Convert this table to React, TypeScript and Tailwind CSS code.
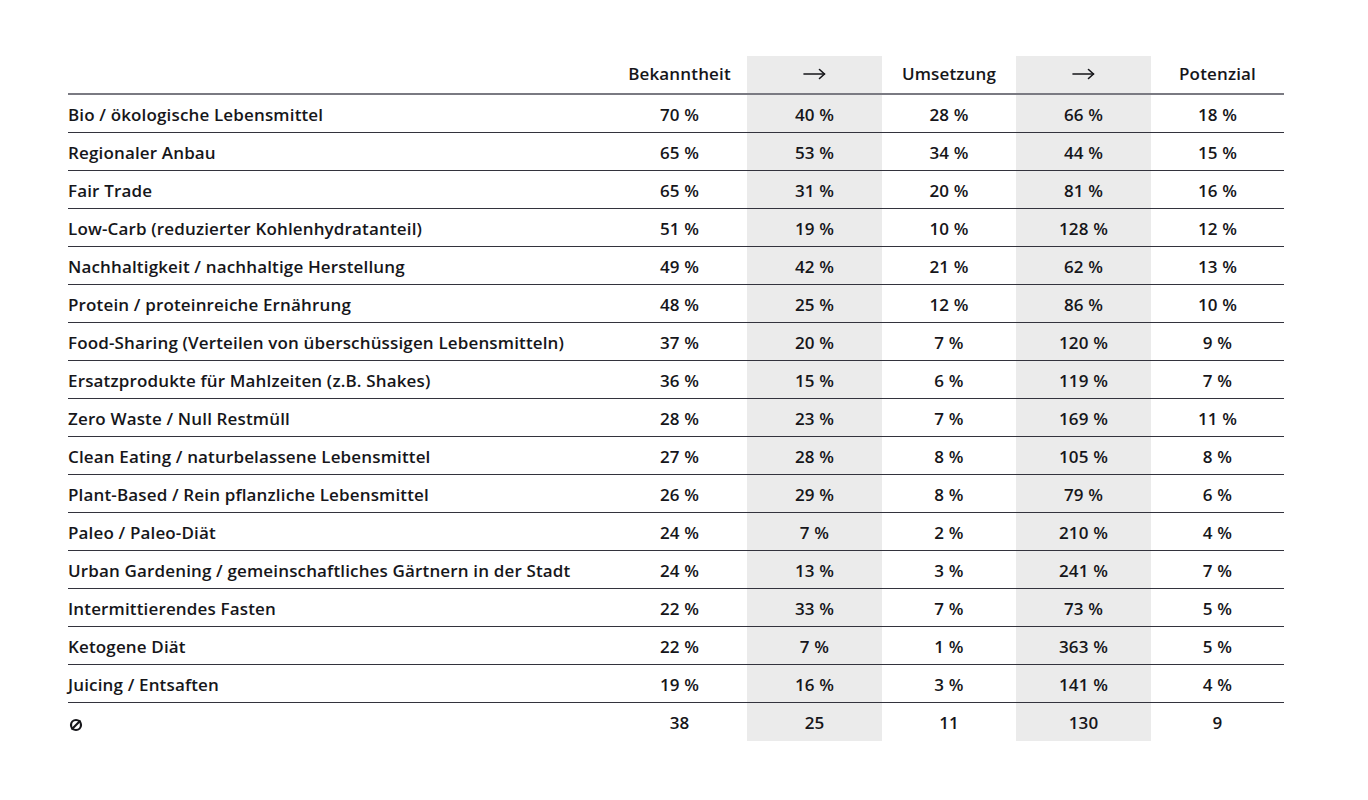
const rows: [string, string, string, string, string, string][] = [
  ['Bio / ökologische Lebensmittel', '70 %', '40 %', '28 %', '66 %', '18 %'],
  ['Regionaler Anbau', '65 %', '53 %', '34 %', '44 %', '15 %'],
  ['Fair Trade', '65 %', '31 %', '20 %', '81 %', '16 %'],
  ['Low-Carb (reduzierter Kohlenhydratanteil)', '51 %', '19 %', '10 %', '128 %', '12 %'],
  ['Nachhaltigkeit / nachhaltige Herstellung', '49 %', '42 %', '21 %', '62 %', '13 %'],
  ['Protein / proteinreiche Ernährung', '48 %', '25 %', '12 %', '86 %', '10 %'],
  ['Food-Sharing (Verteilen von überschüssigen Lebensmitteln)', '37 %', '20 %', '7 %', '120 %', '9 %'],
  ['Ersatzprodukte für Mahlzeiten (z.B. Shakes)', '36 %', '15 %', '6 %', '119 %', '7 %'],
  ['Zero Waste / Null Restmüll', '28 %', '23 %', '7 %', '169 %', '11 %'],
  ['Clean Eating / naturbelassene Lebensmittel', '27 %', '28 %', '8 %', '105 %', '8 %'],
  ['Plant-Based / Rein pflanzliche Lebensmittel', '26 %', '29 %', '8 %', '79 %', '6 %'],
  ['Paleo / Paleo-Diät', '24 %', '7 %', '2 %', '210 %', '4 %'],
  ['Urban Gardening / gemeinschaftliches Gärtnern in der Stadt', '24 %', '13 %', '3 %', '241 %', '7 %'],
  ['Intermittierendes Fasten', '22 %', '33 %', '7 %', '73 %', '5 %'],
  ['Ketogene Diät', '22 %', '7 %', '1 %', '363 %', '5 %'],
  ['Juicing / Entsaften', '19 %', '16 %', '3 %', '141 %', '4 %'],
];

const average = ['38', '25', '11', '130', '9'];

// Zellen: Spalten 2 und 4 grau hinterlegt
function Cell({ children, index, line, head }: { children: React.ReactNode; index: number; line: string; head?: boolean }) {
  const shaded = index === 1 || index === 3;
  return (
    <div className={`${head ? 'h-[39px] pb-[2px]' : 'h-[38px] pt-[2px]'} flex items-center justify-center ${line} ${shaded ? 'bg-[#ebebeb]' : ''}`}>
      {children}
    </div>
  );
}

function Arrow() {
  return (
    <svg width="23" height="12" viewBox="0 0 23 12" fill="none" stroke="#16161a" strokeWidth="1.6" strokeLinecap="round" strokeLinejoin="round">
      <line x1="1" y1="6" x2="21.5" y2="6" />
      <polyline points="16.5,1.5 21.5,6 16.5,10.5" />
    </svg>
  );
}

// Durchschnittszeichen
function Diameter() {
  return (
    <svg width="14" height="14" viewBox="0 0 14 14" fill="none" stroke="#16161a" strokeWidth="2.2">
      <circle cx="7" cy="7" r="5" />
      <line x1="11.5" y1="2.5" x2="2.5" y2="11.5" />
    </svg>
  );
}

export default function App() {
  const rowLine = 'border-b border-[#33333d]';
  const headLine = 'border-b-[2px] border-[#7a7a82]';
  return (
    <div className="w-[1368px] h-[800px] bg-white pt-[56px] pl-[68px] text-[#16161a] text-[17px] font-semibold tracking-[0.15px]" style={{ fontFamily: '"Open Sans", sans-serif' }}>
      <div className="grid grid-cols-[544px_135px_135px_134px_135px_133px]">
        <div className={`h-[39px] ${headLine}`} />
        {['Bekanntheit', <Arrow />, 'Umsetzung', <Arrow />, 'Potenzial'].map((h, i) => (
          <Cell key={i} index={i} line={headLine} head>{h}</Cell>
        ))}
        {rows.map((r) => (
          <>
            <div key={r[0]} className={`h-[38px] pt-[2px] flex items-center ${rowLine}`}>{r[0]}</div>
            {r.slice(1).map((v, i) => (
              <Cell key={r[0] + i} index={i} line={rowLine}>{v}</Cell>
            ))}
          </>
        ))}
        <div className="h-[38px] pt-[6px] pl-[1px] flex items-center">
          <Diameter />
        </div>
        {average.map((v, i) => (
          <Cell key={'avg' + i} index={i} line="">{v}</Cell>
        ))}
      </div>
    </div>
  );
}
